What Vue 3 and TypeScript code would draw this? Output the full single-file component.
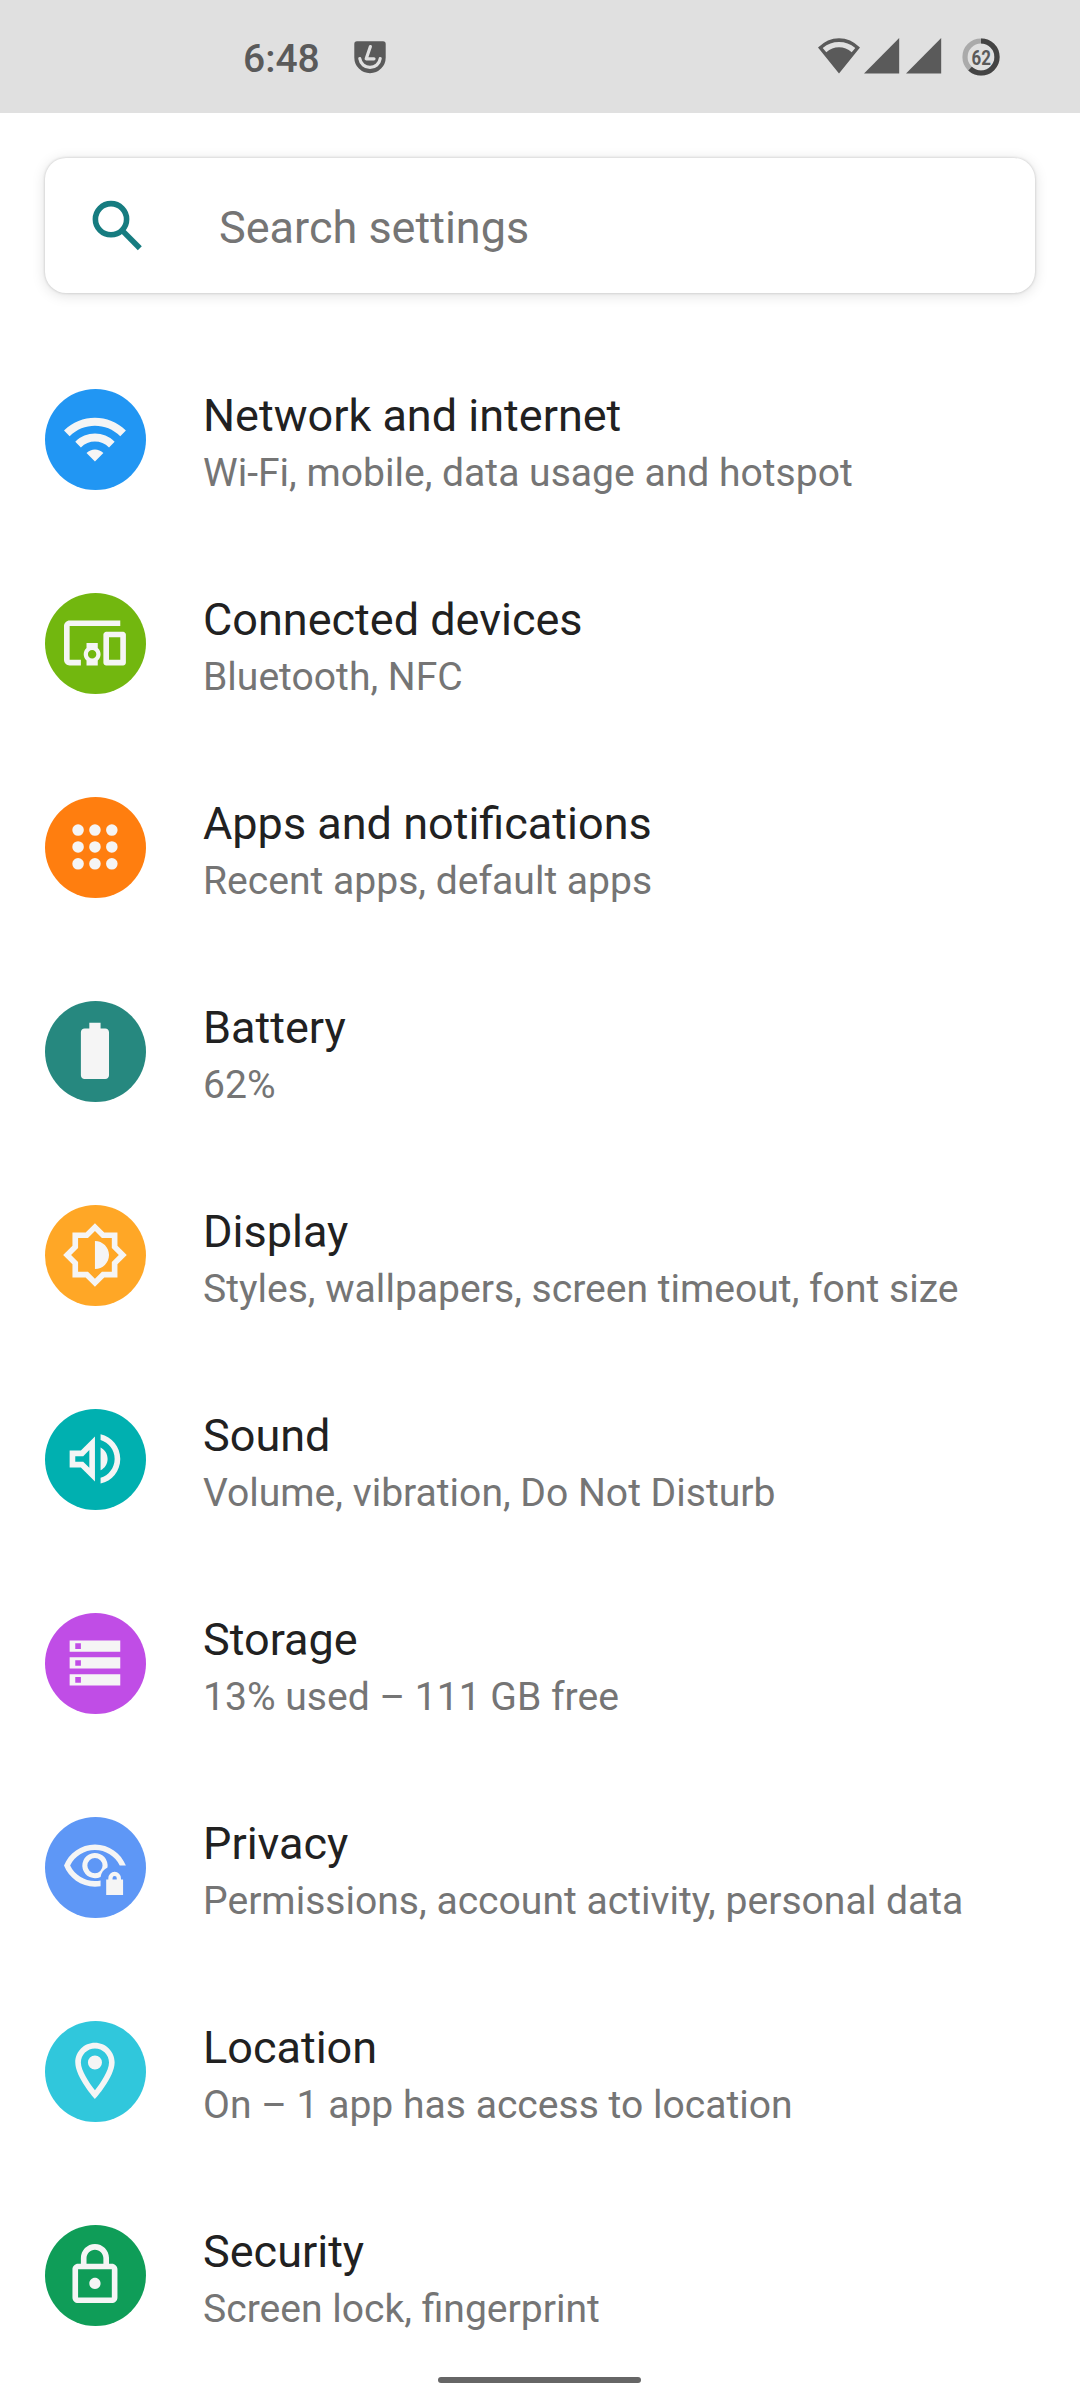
<script setup lang="ts">
interface SettingItem {
  title: string
  summary: string
  color: string
  icon: string
}

const items: SettingItem[] = [
  {
    title: 'Network and internet',
    summary: 'Wi-Fi, mobile, data usage and hotspot',
    color: '#2196f3',
    icon: 'M1 9l2 2c4.97-4.97 13.03-4.97 18 0l2-2C16.93 2.93 7.08 2.93 1 9zm8 8l3 3 3-3c-1.65-1.66-4.34-1.66-6 0zm-4-4l2 2c2.76-2.76 7.24-2.76 10 0l2-2C15.14 9.14 8.87 9.14 5 13z',
  },
  {
    title: 'Connected devices',
    summary: 'Bluetooth, NFC',
    color: '#72b70f',
    icon: 'M3 6h18V4H3c-1.1 0-2 .9-2 2v12c0 1.1.9 2 2 2h4v-2H3V6zm10 6H9v1.78c-.61.55-1 1.33-1 2.22s.39 1.67 1 2.22V20h4v-1.78c.61-.55 1-1.34 1-2.22s-.39-1.67-1-2.22V12zm-2 5.5c-.83 0-1.5-.67-1.5-1.5s.67-1.5 1.5-1.5 1.5.67 1.5 1.5-.67 1.5-1.5 1.5zM22 8h-6c-.5 0-1 .5-1 1v10c0 .5.5 1 1 1h6c.5 0 1-.5 1-1V9c0-.5-.5-1-1-1zm-1 10h-4v-8h4v8z',
  },
  {
    title: 'Apps and notifications',
    summary: 'Recent apps, default apps',
    color: '#ff7e0f',
    icon: [6, 12, 18]
      .flatMap((y) => [6, 12, 18].map((x) => `M${x - 2.05} ${y}a2.05 2.05 0 1 0 4.1 0a2.05 2.05 0 1 0-4.1 0z`))
      .join(''),
  },
  {
    title: 'Battery',
    summary: '62%',
    color: '#26887f',
    icon: 'M15.67 4H14V2h-4v2H8.33C7.6 4 7 4.6 7 5.33v15.33C7 21.4 7.6 22 8.33 22h7.33c.74 0 1.34-.6 1.34-1.33V5.33C17 4.6 16.4 4 15.67 4z',
  },
  {
    title: 'Display',
    summary: 'Styles, wallpapers, screen timeout, font size',
    color: '#ffa726',
    icon: 'M20 8.69V4h-4.69L12 .69 8.69 4H4v4.69L.69 12 4 15.31V20h4.69L12 23.31 15.31 20H20v-4.69L23.31 12 20 8.69zM18 14.48V18h-3.52L12 20.48 9.52 18H6v-3.52L3.52 12 6 9.52V6h3.52L12 3.52 14.48 6H18v3.52L20.48 12 18 14.48zM12 7v10c2.76 0 5-2.24 5-5s-2.24-5-5-5z',
  },
  {
    title: 'Sound',
    summary: 'Volume, vibration, Do Not Disturb',
    color: '#00b0b0',
    icon: 'M3 9v6h4l5 5V4L7 9H3zm7-.17v6.34L7.83 13H5v-2h2.83L10 8.83zM16.5 12c0-1.77-1.02-3.29-2.5-4.03v8.05c1.48-.73 2.5-2.25 2.5-4.02zM14 3.23v2.06c2.89.86 5 3.54 5 6.71s-2.11 5.85-5 6.71v2.06c4.01-.91 7-4.49 7-8.77s-2.99-7.86-7-8.77z',
  },
  {
    title: 'Storage',
    summary: '13% used – 111 GB free',
    color: '#c04de6',
    icon: 'M3 4h18v4H3zM5 5v2h2V5zM3 10h18v4H3zM5 11v2h2v-2zM3 16h18v4H3zM5 17v2h2v-2z',
  },
  {
    title: 'Privacy',
    summary: 'Permissions, account activity, personal data',
    color: '#5e97f6',
    icon: 'M12 4C7 4 2.73 7.11 1 11.5 2.73 15.89 7 19 12 19q1 0 2-.17v-2.02Q13 17 12 17C8.21 17 4.83 14.87 3.18 11.5 4.83 8.13 8.21 6 12 6s7.17 2.13 8.82 5.5H23C21.27 7.11 17 4 12 4zM14 15.54A4.5 4.5 0 1 1 16.45 12.2C15.1 12.9 14.2 14 14 15.54zM12 8.8a2.7 2.7 0 1 0 0 5.4a2.7 2.7 0 1 0 0-5.4zM22 16.5h-.75V16a2.25 2.25 0 0 0-4.5 0v.5H16V22h6zM18.25 16.5V16a.75.75 0 0 1 1.5 0v.5z',
  },
  {
    title: 'Location',
    summary: 'On – 1 app has access to location',
    color: '#30c7dc',
    icon: 'M12 2C8.13 2 5 5.13 5 9c0 5.25 7 13 7 13s7-7.75 7-13c0-3.87-3.13-7-7-7zM7 9c0-2.76 2.24-5 5-5s5 2.24 5 5c0 2.88-2.88 7.19-5 9.88C9.92 16.21 7 11.85 7 9zM9.5 9a2.5 2.5 0 1 0 5 0a2.5 2.5 0 1 0-5 0z',
  },
  {
    title: 'Security',
    summary: 'Screen lock, fingerprint',
    color: '#0f9d58',
    icon: 'M18 8h-1V6c0-2.76-2.24-5-5-5S7 3.24 7 6v2H6c-1.1 0-2 .9-2 2v10c0 1.1.9 2 2 2h12c1.1 0 2-.9 2-2V10c0-1.1-.9-2-2-2zM9 6c0-1.66 1.34-3 3-3s3 1.34 3 3v2H9V6zm9 14H6V10h12v10zm-6-3c1.1 0 2-.9 2-2s-.9-2-2-2-2 .9-2 2 .9 2 2 2z',
  },
]
</script>

<template>
  <div class="screen">
    <header class="status">
      <span class="clock">6:48</span>
      <svg class="app-badge" width="32" height="33" viewBox="0 0 32 33">
        <path d="M3 0.3h26q2.7 0 2.7 2.7v13.5a15.7 15.7 0 0 1-31.4 0V3Q.3.3 3 .3z" fill="#5a5a5a" />
        <g fill="none" stroke="#e0e0e0" stroke-linecap="round" stroke-linejoin="round">
          <path d="M5.8 17.6a10.3 10.3 0 0 0 20.4 0" stroke-width="3.2" />
          <path d="M16.4 5.6l-4.2 12.2h7.8" stroke-width="3.2" />
        </g>
      </svg>
      <div class="signals">
        <svg width="42" height="36" viewBox="0 0 42 36">
          <path
            fill="#5a5a5a"
            fill-rule="evenodd"
            d="M21 35.4L0 9.6Q9.4.3 21 .3t21 9.3zM4.7 9.9L8.3 14.3Q14 9.2 21 9.2t12.7 5.1L37.3 9.9Q30 4 21 4T4.7 9.9z"
          />
        </svg>
        <svg class="cell" width="36" height="36" viewBox="0 0 36 36"><path d="M0 35.4L35.2 0v35.4z" fill="#5a5a5a" /></svg>
        <svg class="cell next" width="36" height="36" viewBox="0 0 36 36"><path d="M0 35.4L35.2 0v35.4z" fill="#5a5a5a" /></svg>
        <svg class="ring" width="38" height="38" viewBox="0 0 38 38">
          <circle cx="19" cy="19" r="16" fill="none" stroke="#aaaaaa" stroke-width="5.2" />
          <circle
            cx="19" cy="19" r="16" fill="none" stroke="#444444" stroke-width="5.2"
            pathLength="100" stroke-dasharray="62 38" transform="rotate(-90 19 19)"
          />
          <text x="9.6" y="26.6" textLength="19.4" lengthAdjust="spacingAndGlyphs" class="level">62</text>
        </svg>
      </div>
    </header>

    <div class="search">
      <svg width="68" height="68" viewBox="0 0 68 68" fill="none" stroke="#167c80" stroke-width="5.6">
        <circle cx="27" cy="27.2" r="15.6" />
        <path d="M37.6 37.9L55.8 56.3" />
      </svg>
      <span class="hint">Search settings</span>
    </div>

    <main class="list">
      <div v-for="item in items" :key="item.title" class="row">
        <svg class="icon" width="101" height="101" viewBox="0 0 101 101">
          <circle cx="50.5" cy="50.5" r="50.5" :fill="item.color" />
          <path :d="item.icon" transform="translate(16.2 16.2) scale(2.8125)" fill="#f5f5f5" fill-rule="evenodd" />
        </svg>
        <div class="text">
          <div class="title">{{ item.title }}</div>
          <div class="summary">{{ item.summary }}</div>
        </div>
      </div>
    </main>

    <div class="home-pill"></div>
  </div>
</template>

<style>
body {
  background: #fff;
}
</style>

<style scoped>
.screen {
  position: relative;
  width: 1080px;
  height: 2400px;
  overflow: hidden;
  background: #fff;
  font-family: Roboto, sans-serif;
}

.status {
  display: flex;
  align-items: flex-start;
  height: 113px;
  padding: 0 80px 0 243px;
  box-sizing: border-box;
  background: #e0e0e0;
}

.clock {
  width: 111px;
  margin-top: 36px;
  font-size: 39px;
  line-height: 47px;
  font-weight: 500;
  color: #5a5a5a;
}

.app-badge {
  margin-top: 40.5px;
}

.signals {
  display: flex;
  align-items: flex-start;
  margin: 38px 0 0 auto;
}

.cell {
  margin-left: 4px;
}

.next {
  margin-left: 6px;
}

.ring {
  margin: -0.5px 0 0 20px;
}

.level {
  font-size: 19.5px;
  font-weight: 700;
  fill: #5a5a5a;
}

.search {
  display: flex;
  align-items: center;
  width: 990px;
  height: 135px;
  margin: 45px auto 0;
  padding-left: 39px;
  box-sizing: border-box;
  border-radius: 21px;
  background: #fff;
  box-shadow: 0 0 3px rgba(0, 0, 0, 0.2), 0 2px 14px rgba(0, 0, 0, 0.13);
}

.hint {
  margin: 5px 0 0 67px;
  font-size: 45px;
  line-height: 54px;
  color: #757575;
}

.list {
  padding-top: 44px;
}

.row {
  display: flex;
  align-items: flex-start;
  height: 204px;
  padding: 49px 0 0 45px;
  box-sizing: border-box;
}

.icon {
  flex: none;
  margin-top: 3px;
}

.text {
  margin-left: 57px;
  white-space: nowrap;
}

.title {
  font-size: 45px;
  line-height: 60px;
  color: #212121;
}

.summary {
  font-size: 39.08px;
  line-height: 54px;
  color: #757575;
}

.home-pill {
  position: absolute;
  left: 438px;
  bottom: 17px;
  width: 203px;
  height: 6px;
  border-radius: 3px;
  background: #666;
}
</style>
